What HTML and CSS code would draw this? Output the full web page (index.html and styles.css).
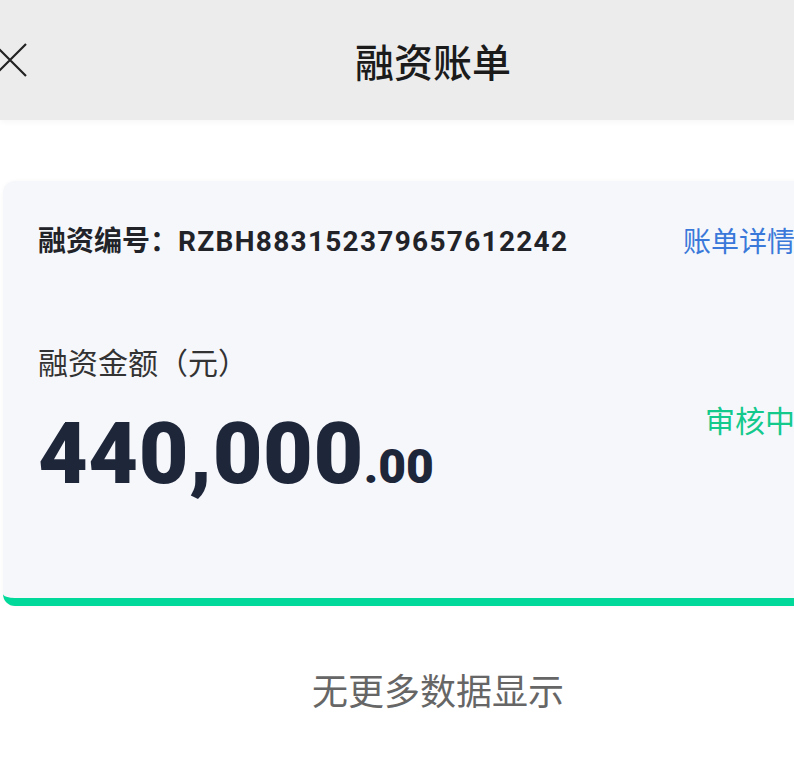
FILE: index.html
```html
<!DOCTYPE html>
<html lang="zh-CN">
<head>
<meta charset="utf-8">
<title>融资账单</title>
<link rel="stylesheet" href="styles.css">
</head>
<body>
<div class="page">
  <header class="topbar">
    <button class="close" aria-label="关闭">
      <svg width="34" height="34" viewBox="0 0 34 34"><path d="M1 1 L33 33 M33 1 L1 33" stroke="#222" stroke-width="2.2" fill="none"/></svg>
    </button>
    <h1 class="title">融资账单</h1>
    <span class="spacer"></span>
  </header>

  <main class="content">
    <section class="card">
      <div class="row-top">
        <div class="bill-no"><span class="bill-label">融资编号：</span><span class="bill-code">RZBH883152379657612242</span></div>
        <a class="detail-link">账单详情</a>
      </div>
      <div class="row-amount">
        <div class="amount-block">
          <div class="amount-label">融资金额（元）</div>
          <div class="amount"><span class="amount-int">440,000</span><span class="amount-dec">.00</span></div>
        </div>
        <div class="status">审核中</div>
      </div>
    </section>
    <p class="no-more">无更多数据显示</p>
  </main>
</div>
</body>
</html>
```

FILE: styles.css
```css
html, body {
  margin: 0;
  padding: 0;
  background: #ffffff;
  overflow: hidden;
}
body {
  font-family: "Noto Sans CJK SC", "Noto Sans", sans-serif;
}
.page {
  width: 866px;
}
.topbar {
  height: 120px;
  background: #ececec;
  display: grid;
  grid-template-columns: 1fr auto 1fr;
  align-items: center;
  box-shadow: 0 2px 6px rgba(0, 0, 0, 0.04);
}
.close {
  justify-self: start;
  margin: 0 0 0 -7px;
  padding: 0;
  border: 0;
  background: none;
  width: 34px;
  height: 34px;
  display: flex;
}
.title {
  margin: 0;
  font-size: 39px;
  font-weight: 500;
  color: #1b1b1b;
  line-height: 52px;
}
.content {
  padding-top: 61px;
}
.card {
  margin: 0 3px;
  background: #f6f7fb;
  border-radius: 12px;
  border-bottom: 8px solid #00d99a;
  padding: 39px 68px 101px 35px;
  box-shadow: 0 0 4px rgba(0, 0, 0, 0.03);
}
.row-top {
  display: flex;
  justify-content: space-between;
  align-items: center;
  height: 40px;
}
.bill-no {
  font-size: 28px;
  font-weight: 700;
  color: #222328;
  line-height: 40px;
  white-space: nowrap;
}
.bill-code {
  font-family: Roboto, "Noto Sans CJK SC", sans-serif;
  letter-spacing: 1.3px;
}
.detail-link {
  font-size: 28px;
  color: #3a79d9;
  line-height: 40px;
}
.row-amount {
  margin-top: 81px;
  display: flex;
  justify-content: space-between;
  align-items: center;
}
.amount-label {
  font-size: 30px;
  line-height: 40px;
  color: #333333;
}
.amount {
  margin-top: 30px;
  line-height: 86px;
  height: 86px;
  color: #1e263a;
  font-family: Roboto, sans-serif;
  font-weight: 900;
  white-space: nowrap;
}
.amount-int {
  font-size: 86px;
  letter-spacing: 0.5px;
}
.amount-dec {
  font-size: 48px;
}
.status {
  font-size: 30px;
  color: #13c98c;
  line-height: 40px;
  margin-top: 0;
}
.no-more {
  margin: 58px 0 0 0;
  padding-left: 10px;
  text-align: center;
  font-size: 36px;
  line-height: 50px;
  color: #666666;
}
```
